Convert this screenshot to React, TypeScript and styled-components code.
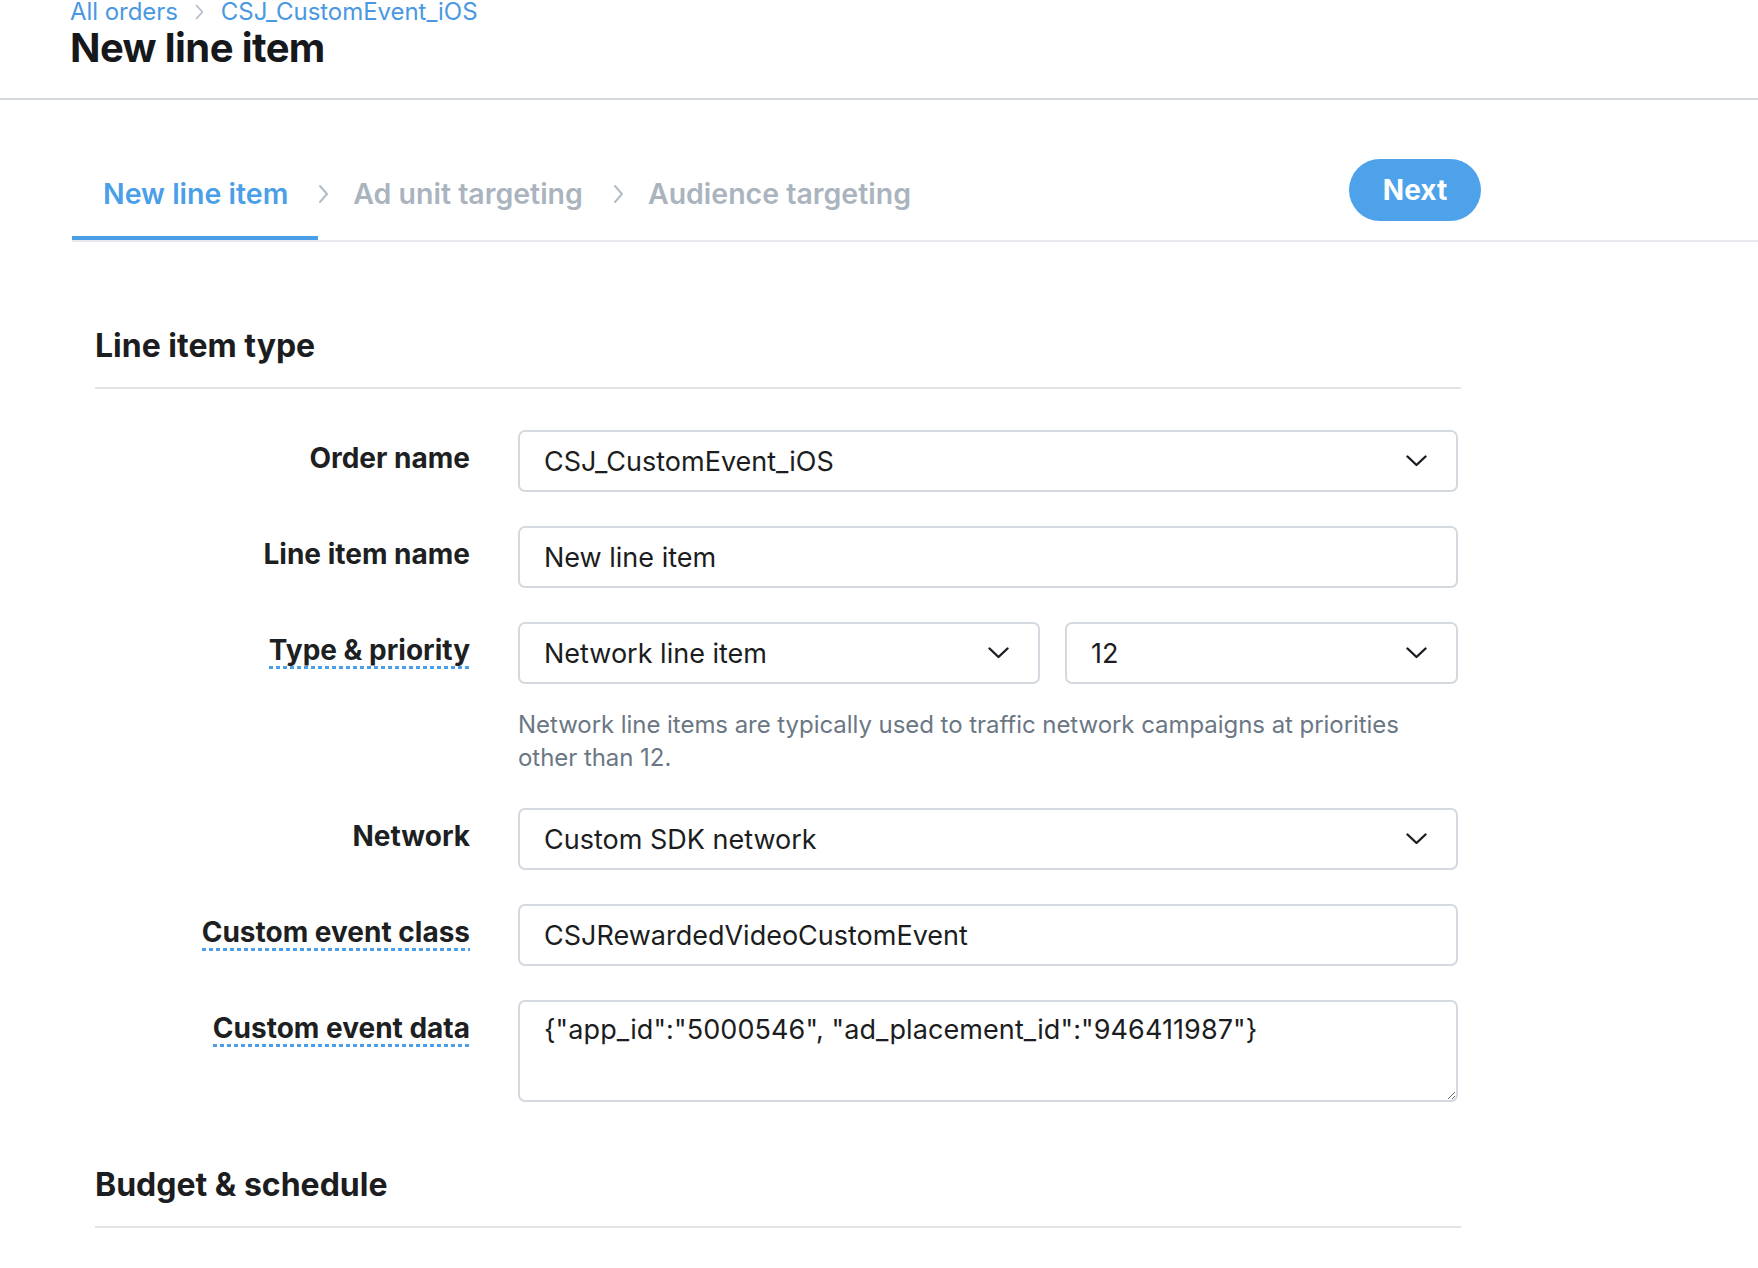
import React from "react";
import styled, { createGlobalStyle, css } from "styled-components";

const GlobalStyle = createGlobalStyle`
  html, body { margin: 0; padding: 0; background: #ffffff; }
  body {
    font-family: Inter, "Noto Sans", "Liberation Sans", sans-serif;
    color: #1b1d21;
    -webkit-font-smoothing: antialiased;
  }
  *, *::before, *::after { box-sizing: border-box; }
`;

const Page = styled.div`
  width: 1758px;
  height: 1268px;
  overflow: hidden;
`;

const Header = styled.header`
  padding: 0 0 26px 70px;
  border-bottom: 2px solid #d3d8dd;
`;

const Breadcrumb = styled.nav`
  display: flex;
  align-items: center;
  gap: 17px;
  font-size: 24px;
  line-height: 24px;
  letter-spacing: -0.05px;
`;

const Crumb = styled.a`
  color: #4a98e2;
  text-decoration: none;
`;

const CrumbSep = styled.svg`
  width: 9px;
  height: 16px;
  flex: none;
`;

const Title = styled.h1`
  margin: 0;
  font-size: 40px;
  line-height: 48px;
  font-weight: 700;
  letter-spacing: -0.6px;
  color: #16181b;
`;

const TabBar = styled.div`
  margin: 58px 0 0 72px;
  border-bottom: 2px solid #e7eaee;
`;

const TabRow = styled.div`
  width: 1409px;
  display: flex;
  align-items: flex-start;
  justify-content: space-between;
`;

const Tabs = styled.div`
  display: flex;
  align-items: flex-start;
`;

const Tab = styled.div<{ $active?: boolean; $first?: boolean }>`
  padding: 18px 30px 24px ${(p) => (p.$first ? "31px" : "24px")};
  font-size: 28.5px;
  line-height: 36px;
  font-weight: 600;
  color: ${(p) => (p.$active ? "#4a9fe8" : "#aab4be")};
  border-bottom: 4px solid ${(p) => (p.$active ? "#4a9fe8" : "transparent")};
`;

const TabSep = styled.svg`
  width: 11px;
  height: 20px;
  margin-top: 26px;
  flex: none;
`;

const NextButton = styled.button`
  margin-top: 1px;
  width: 132px;
  height: 62px;
  border: none;
  border-radius: 31px;
  background: #4da2ea;
  color: #ffffff;
  font-family: Inter, "Noto Sans", sans-serif;
  font-size: 28px;
  font-weight: 700;
  cursor: pointer;
`;

const Section = styled.section<{ $gapTop: number }>`
  margin: ${(p) => p.$gapTop}px 0 0 95px;
  width: 1366px;
`;

const SectionTitle = styled.h2`
  margin: 0;
  padding-bottom: 23px;
  border-bottom: 2px solid #e2e5e8;
  font-size: 32px;
  line-height: 36px;
  font-weight: 700;
  color: #1b1d21;
`;

const Form = styled.div`
  padding: 41px 3px 0 0;
  display: flex;
  flex-direction: column;
  gap: 34px;
`;

const Row = styled.div`
  display: grid;
  grid-template-columns: 375px 1fr;
  column-gap: 48px;
  align-items: start;
`;

const LabelCell = styled.div`
  text-align: right;
  padding-top: 12px;
`;

const Label = styled.span<{ $hint?: boolean }>`
  display: inline-block;
  font-size: 28px;
  line-height: 32px;
  font-weight: 700;
  color: #1d1f23;
  padding-bottom: 3px;
  ${(p) =>
    p.$hint &&
    css`
      background-image: linear-gradient(
        to right,
        #4a9fe8 0,
        #4a9fe8 4px,
        transparent 4px,
        transparent 7px
      );
      background-size: 7px 3px;
      background-repeat: repeat-x;
      background-position: left bottom;
    `}
`;

const fieldBase = css`
  height: 62px;
  border: 2px solid #d4d9df;
  border-radius: 7px;
  background: #ffffff;
  font-family: Inter, "Noto Sans", sans-serif;
  font-size: 27px;
  color: #1b1d21;
`;

const TextInput = styled.input`
  ${fieldBase};
  width: 100%;
  padding: 0 24px;
  outline: none;
`;

const Select = styled.div`
  ${fieldBase};
  display: flex;
  align-items: center;
  justify-content: space-between;
  padding: 0 29px 0 24px;
`;

const Chevron = styled.svg`
  width: 21px;
  height: 12px;
  flex: none;
`;

const SelectPair = styled.div`
  display: grid;
  grid-template-columns: 522px 1fr;
  column-gap: 25px;
`;

const Help = styled.p`
  margin: 24px 0 0;
  font-size: 24px;
  line-height: 33px;
  letter-spacing: -0.05px;
  color: #6b7784;
`;

const TextArea = styled.textarea`
  ${fieldBase};
  display: block;
  width: 100%;
  height: 102px;
  padding: 12px 24px;
  line-height: 32px;
  letter-spacing: 0.1px;
  outline: none;
  resize: vertical;
`;

const SelectArrow = () => (
  <Chevron viewBox="0 0 21 12" fill="none">
    <polyline
      points="1.5,1.5 10.5,10 19.5,1.5"
      stroke="#1b1d21"
      strokeWidth="2.4"
      strokeLinecap="round"
      strokeLinejoin="round"
    />
  </Chevron>
);

const Dropdown = ({ value }: { value: string }) => (
  <Select>
    <span>{value}</span>
    <SelectArrow />
  </Select>
);

const TabChevron = () => (
  <TabSep viewBox="0 0 11 20" fill="none">
    <polyline points="2,2 9,10 2,18" stroke="#b3bcc5" strokeWidth="2" strokeLinecap="round" strokeLinejoin="round" />
  </TabSep>
);

const FieldRow = ({
  label,
  hint,
  children,
}: {
  label: string;
  hint?: boolean;
  children: React.ReactNode;
}) => (
  <Row>
    <LabelCell>
      <Label $hint={hint}>{label}</Label>
    </LabelCell>
    <div>{children}</div>
  </Row>
);

export default function App() {
  return (
    <Page>
      <GlobalStyle />
      <Header>
        <Breadcrumb>
          <Crumb href="#">All orders</Crumb>
          <CrumbSep viewBox="0 0 9 16" fill="none">
            <polyline points="1.5,1.5 7.5,8 1.5,14.5" stroke="#b0b8c1" strokeWidth="1.6" strokeLinecap="round" strokeLinejoin="round" />
          </CrumbSep>
          <Crumb href="#">CSJ_CustomEvent_iOS</Crumb>
        </Breadcrumb>
        <Title>New line item</Title>
      </Header>

      <TabBar>
        <TabRow>
          <Tabs>
            <Tab $active $first>
              New line item
            </Tab>
            <TabChevron />
            <Tab>Ad unit targeting</Tab>
            <TabChevron />
            <Tab>Audience targeting</Tab>
          </Tabs>
          <NextButton type="button">Next</NextButton>
        </TabRow>
      </TabBar>

      <Section $gapTop={86}>
        <SectionTitle>Line item type</SectionTitle>
        <Form>
          <FieldRow label="Order name">
            <Dropdown value="CSJ_CustomEvent_iOS" />
          </FieldRow>
          <FieldRow label="Line item name">
            <TextInput readOnly value="New line item" />
          </FieldRow>
          <FieldRow label="Type & priority" hint>
            <SelectPair>
              <Dropdown value="Network line item" />
              <Dropdown value="12" />
            </SelectPair>
            <Help>
              Network line items are typically used to traffic network campaigns at priorities
              <br />
              other than 12.
            </Help>
          </FieldRow>
          <FieldRow label="Network">
            <Dropdown value="Custom SDK network" />
          </FieldRow>
          <FieldRow label="Custom event class" hint>
            <TextInput readOnly value="CSJRewardedVideoCustomEvent" />
          </FieldRow>
          <FieldRow label="Custom event data" hint>
            <TextArea readOnly value={'{"app_id":"5000546", "ad_placement_id":"946411987"}'} />
          </FieldRow>
        </Form>
      </Section>

      <Section $gapTop={65}>
        <SectionTitle>Budget &amp; schedule</SectionTitle>
        <Form>
          <Row>
            <LabelCell />
            <TextInput readOnly value="" />
          </Row>
        </Form>
      </Section>
    </Page>
  );
}
